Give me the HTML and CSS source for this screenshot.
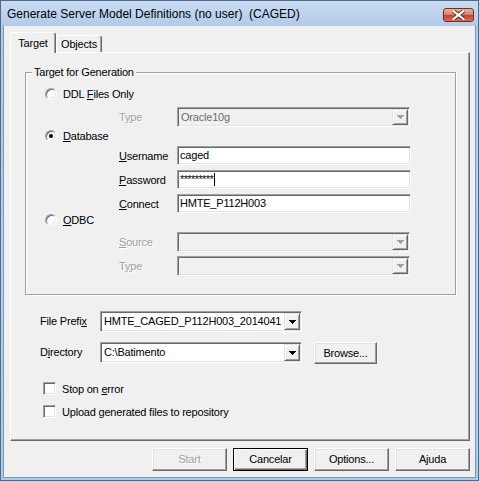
FILE: index.html
```html
<!DOCTYPE html>
<html>
<head>
<meta charset="utf-8">
<title>Generate Server Model Definitions</title>
<link rel="stylesheet" href="styles.css">
</head>
<body>
<div class="window">
  <div class="titlebar">
    <span class="title">Generate Server Model Definitions (no user)&nbsp; (CAGED)</span>
    <div class="close">
      <svg width="13" height="10" viewBox="0 0 13 10"><path d="M1.5 1 L11.5 9 M11.5 1 L1.5 9" stroke="#5a2a24" stroke-width="4" stroke-linecap="square"/><path d="M1.5 1 L11.5 9 M11.5 1 L1.5 9" stroke="#fff" stroke-width="2.2" stroke-linecap="square"/></svg>
    </div>
  </div>
  <div class="client">
    <div class="tabs">
      <div class="tab tab-active">Target</div>
      <div class="tab tab-objects">Objects</div>
    </div>
    <div class="panel">
      <fieldset class="group">
        <legend>Target for Generation</legend>
        <div class="opt mt-ddl"><span class="radio"></span><span class="opt-label">DDL <u>F</u>iles Only</span></div>
        <div class="field mt-type1"><span class="lbl lbl-disabled">T<u>y</u>pe</span>
          <div class="combo combo-field combo-disabled"><span class="combo-text">Oracle10g</span><span class="drop"><svg class="arrow arrow-disabled" width="7" height="4" viewBox="0 0 7 4"><path d="M0 0h7v1H0zM1 1h5v1H1zM2 2h3v1H2zM3 3h1v1H3z"/></svg></span></div>
        </div>
        <div class="opt mt-db"><span class="radio radio-checked"><span class="dot"></span></span><span class="opt-label"><u>D</u>atabase</span></div>
        <div class="field mt-user"><span class="lbl"><u>U</u>sername</span><div class="input">caged</div></div>
        <div class="field mt-pass"><span class="lbl"><u>P</u>assword</span><div class="input"><span class="pw">*********</span><span class="caret"></span></div></div>
        <div class="field mt-pass"><span class="lbl"><u>C</u>onnect</span><div class="input">HMTE_P112H003</div></div>
        <div class="opt"><span class="radio"></span><span class="opt-label"><u>O</u>DBC</span></div>
        <div class="field mt-src"><span class="lbl lbl-disabled"><u>S</u>ource</span>
          <div class="combo combo-field combo-disabled"><span class="combo-text"></span><span class="drop"><svg class="arrow arrow-disabled" width="7" height="4" viewBox="0 0 7 4"><path d="M0 0h7v1H0zM1 1h5v1H1zM2 2h3v1H2zM3 3h1v1H3z"/></svg></span></div>
        </div>
        <div class="field mt-type2"><span class="lbl lbl-disabled">T<u>y</u>pe</span>
          <div class="combo combo-field combo-disabled"><span class="combo-text"></span><span class="drop"><svg class="arrow arrow-disabled" width="7" height="4" viewBox="0 0 7 4"><path d="M0 0h7v1H0zM1 1h5v1H1zM2 2h3v1H2zM3 3h1v1H3z"/></svg></span></div>
        </div>
      </fieldset>

      <div class="row mt-prefix">
        <span class="row-lbl">File Prefi<u>x</u></span>
        <div class="combo combo-path"><span class="combo-text">HMTE_CAGED_P112H003_2014041</span><span class="drop"><svg class="arrow" width="7" height="4" viewBox="0 0 7 4"><path d="M0 0h7v1H0zM1 1h5v1H1zM2 2h3v1H2zM3 3h1v1H3z"/></svg></span></div>
      </div>
      <div class="row mt-dir">
        <span class="row-lbl">D<u>i</u>rectory</span>
        <div class="combo combo-path"><span class="combo-text">C:\Batimento</span><span class="drop"><svg class="arrow" width="7" height="4" viewBox="0 0 7 4"><path d="M0 0h7v1H0zM1 1h5v1H1zM2 2h3v1H2zM3 3h1v1H3z"/></svg></span></div>
        <div class="btn btn-browse">Browse...</div>
      </div>
      <div class="check mt-check1"><span class="box"></span><span>Stop on <u>e</u>rror</span></div>
      <div class="check mt-check2"><span class="box"></span><span>Upload generated files to repository</span></div>
    </div>
    <div class="buttons">
      <div class="btn btn-disabled">Start</div>
      <div class="btn btn-default">Cancelar</div>
      <div class="btn">Options...</div>
      <div class="btn">Ajuda</div>
    </div>
  </div>
</div>
</body>
</html>
```

FILE: styles.css
```css
* { box-sizing: border-box; }

body {
  margin: 0;
  font-family: "Liberation Sans", Arial, sans-serif;
  font-size: 11px;
  letter-spacing: -0.2px;
  color: #000;
  background: #f0f0f0;
}

u { text-decoration: underline; text-underline-offset: 1px; }

.window {
  width: 479px;
  height: 481px;
  border: 1px solid #52698a;
  background: linear-gradient(#c8dbf2 0, #b2cbea 25px, #b4d2ee 60%, #a3d0ea 100%);
  display: flex;
  flex-direction: column;
}

.titlebar {
  height: 24px;
  display: flex;
  justify-content: space-between;
  align-items: flex-start;
  padding: 0 4px 0 6px;
}

.title {
  font-size: 12px;
  letter-spacing: 0;
  line-height: 15px;
  margin-top: 6px;
  color: #000;
}

.close {
  width: 31px;
  height: 14px;
  margin-top: 7px;
  border: 1px solid #7b2a1e;
  border-radius: 3px;
  background: linear-gradient(#eab1a3, #d9826f 45%, #c4452e 55%, #d3705b);
  display: flex;
  align-items: center;
  justify-content: center;
}

.client {
  flex: 1;
  margin: 0 2px 2px 2px;
  background: #f0f0f0;
  border: 1px solid #7f95b1;
  border-top-color: #b5cbe8;
  padding: 6px 5px 0 6px;
  display: flex;
  flex-direction: column;
}

/* tabs */
.tabs {
  display: flex;
  align-items: flex-end;
  height: 20px;
}

.tab {
  height: 17px;
  width: 46px;
  border-top: 1px solid #fff;
  border-left: 1px solid #fff;
  border-right: 1px solid #696969;
  border-radius: 3px 3px 0 0;
  box-shadow: inset -1px 0 #a0a0a0;
  line-height: 16px;
  text-align: center;
  background: #f0f0f0;
}

.tab-active {
  height: 21px;
  margin-bottom: -1px;
  line-height: 20px;
  position: relative;
  z-index: 1;
}

/* panel */
.panel {
  width: 460px;
  height: 389px;
  border: 1px solid;
  border-color: #fff #696969 #696969 #fff;
  box-shadow: inset -1px -1px #a0a0a0;
  display: flex;
  flex-direction: column;
  align-items: flex-start;
}

.group {
  margin: 13px 0 0 14px;
  width: 431px;
  min-width: 0;
  padding: 0 0 18px 0;
  border: 1px solid #a0a0a0;
  box-shadow: inset 1px 1px #fff, 1px 1px #fff;
  display: flex;
  flex-direction: column;
}

.group legend {
  margin-left: 6px;
  padding: 0 2px;
  line-height: 13px;
  background: #f0f0f0;
}

.opt {
  display: flex;
  align-items: center;
  height: 14px;
  margin-left: 19px;
  gap: 6px;
}

.radio {
  width: 12px;
  height: 12px;
  border-radius: 50%;
  border: 1px solid;
  border-color: #a0a0a0 #fff #fff #a0a0a0;
  box-shadow: inset 1px 1px #696969, inset -1px -1px #e3e3e3;
  background: #fff;
  display: flex;
  align-items: center;
  justify-content: center;
}

.dot {
  width: 4px;
  height: 4px;
  border-radius: 50%;
  background: #000;
}

.field {
  display: flex;
  align-items: center;
  margin-left: 93px;
}

.lbl { width: 58px; }

.lbl-disabled {
  color: #a0a0a0;
  text-shadow: 1px 1px #fff;
}

.mt-ddl { margin-top: 8px; }
.mt-type1 { margin-top: 6px; }
.mt-db { margin-top: 2px; }
.mt-user { margin-top: 3px; }
.mt-pass { margin-top: 5px; }
.mt-src { margin-top: 5px; }
.mt-type2 { margin-top: 4px; }

.input {
  width: 234px;
  height: 19px;
  border: 1px solid;
  border-color: #a0a0a0 #fff #fff #a0a0a0;
  box-shadow: inset 1px 1px #696969, inset -1px -1px #e3e3e3;
  background: #fff;
  padding: 0 2px;
  line-height: 17px;
  display: flex;
  align-items: center;
  white-space: nowrap;
}

.pw { letter-spacing: -0.6px; }

.caret {
  width: 1px;
  height: 13px;
  background: #000;
  margin-left: 1px;
}

.combo {
  height: 20px;
  border: 1px solid;
  border-color: #a0a0a0 #fff #fff #a0a0a0;
  box-shadow: inset 1px 1px #696969, inset -1px -1px #e3e3e3;
  background: #fff;
  padding: 1px;
  display: flex;
}

.combo-field { width: 233px; }
.combo-disabled { background: #f0f0f0; }
.combo-disabled .combo-text { color: #6d6d6d; }

.combo-text {
  flex: 1;
  min-width: 0;
  overflow: hidden;
  white-space: nowrap;
  padding-left: 2px;
  line-height: 16px;
}

.drop {
  width: 16px;
  flex: none;
  border: 1px solid;
  border-color: #e3e3e3 #696969 #696969 #e3e3e3;
  box-shadow: inset 1px 1px #fff, inset -1px -1px #a0a0a0;
  background: #f0f0f0;
  display: flex;
  align-items: center;
  justify-content: center;
}

.arrow { fill: #000; display: block; }
.arrow-disabled { fill: #a0a0a0; }

/* lower rows */
.row {
  display: flex;
  align-items: flex-start;
  margin-left: 29px;
}

.row-lbl {
  width: 60px;
  line-height: 21px;
}

.combo-path {
  width: 202px;
  height: 21px;
}

.combo-path .combo-text { line-height: 17px; }

.mt-prefix { margin-top: 16px; }
.mt-dir { margin-top: 10px; }

.btn {
  width: 75px;
  height: 23px;
  border: 1px solid;
  border-color: #fff #696969 #696969 #fff;
  box-shadow: inset -1px -1px #a0a0a0, inset 1px 1px #e3e3e3;
  background: #f0f0f0;
  text-align: center;
  line-height: 21px;
  white-space: nowrap;
}

.btn-browse {
  width: 63px;
  height: 22px;
  line-height: 20px;
  margin-left: 12px;
}

.check {
  display: flex;
  align-items: center;
  gap: 6px;
  margin-left: 32px;
  height: 13px;
}

.box {
  width: 13px;
  height: 13px;
  border: 1px solid;
  border-color: #a0a0a0 #fff #fff #a0a0a0;
  box-shadow: inset 1px 1px #696969, inset -1px -1px #e3e3e3;
  background: #fff;
}

.mt-check1 { margin-top: 18px; }
.mt-check2 { margin-top: 10px; }

.buttons {
  display: flex;
  justify-content: flex-end;
  gap: 6px;
  margin-top: 7px;
}

.btn-disabled {
  color: #a0a0a0;
  text-shadow: 1px 1px #fff;
}

.btn-default {
  border-color: #000;
  box-shadow: inset 1px 1px #fff, inset -1px -1px #696969, inset -2px -2px #a0a0a0;
}
```
